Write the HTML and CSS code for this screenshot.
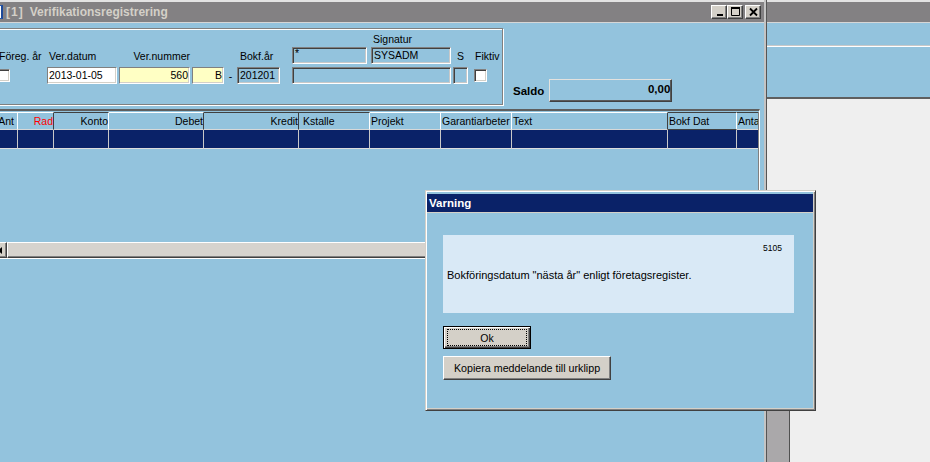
FILE: index.html
```html
<!DOCTYPE html>
<html>
<head>
<meta charset="utf-8">
<link rel="stylesheet" href="styles.css">
</head>
<body>
<div class="screen">
  <div class="main">
    <div class="topline"></div>
    <div class="titlebar">
      <span class="appicon"></span>
      <span class="title"><span class="tnum">[1]</span><span class="tname">Verifikationsregistrering</span></span>
      <div class="winbtns">
        <span class="wbtn"><svg width="14" height="12" viewBox="0 0 14 12"><rect x="5" y="8" width="6" height="2" fill="#000"/></svg></span>
        <span class="wbtn"><svg width="14" height="12" viewBox="0 0 14 12"><path d="M3.5 1.5h8v8h-8z" fill="none" stroke="#000"/><rect x="3" y="1" width="9" height="2" fill="#000"/></svg></span>
        <span class="wbtn wclose"><svg width="14" height="12" viewBox="0 0 14 12"><path d="M4 2.5L11 9.5M11 2.5L4 9.5" stroke="#000" stroke-width="1.8"/></svg></span>
      </div>
    </div>
    <div class="client">
      <div class="toprow">
        <div class="groupbox">
          <span class="lbl a-foreg-l">Föreg. år</span>
          <span class="chk a-foreg-c"></span>
          <span class="lbl a-datum-l">Ver.datum</span>
          <span class="fld white a-datum-f">2013-01-05</span>
          <span class="lbl a-num-l">Ver.nummer</span>
          <span class="fld yellow a-num-f">560</span>
          <span class="fld yellow a-b-f">B</span>
          <span class="lbl a-dash">-</span>
          <span class="lbl a-bokf-l">Bokf.år</span>
          <span class="fld ro a-bokf-f">201201</span>
          <span class="fld ro star a-star-f">*</span>
          <span class="lbl a-sig-l">Signatur</span>
          <span class="fld ro a-sig-f">SYSADM</span>
          <span class="fld ro a-wide-f"></span>
          <span class="lbl a-s-l">S</span>
          <span class="fld ro a-s-f"></span>
          <span class="lbl a-fik-l">Fiktiv</span>
          <span class="chk a-fik-c"></span>
        </div>
        <div class="saldo">
          <span class="saldo-label">Saldo</span>
          <div class="saldo-box">0,00</div>
        </div>
      </div>
      <div class="gridframe">
        <div class="gridinner">
          <div class="ghead">
            <div class="hc right">Ant</div>
            <div class="hc right red dr">Rad</div>
            <div class="hc right dt">Konto</div>
            <div class="hc right dr">Debet</div>
            <div class="hc right dt dr">Kredit</div>
            <div class="hc dt kst">Kstalle</div>
            <div class="hc">Projekt</div>
            <div class="hc">Garantiarbeter</div>
            <div class="hc dr">Text</div>
            <div class="hc dt db">Bokf Dat</div>
            <div class="hc dt last">Antal</div>
          </div>
          <div class="grow">
            <div class="rc"></div><div class="rc"></div><div class="rc"></div><div class="rc"></div>
            <div class="rc"></div><div class="rc"></div><div class="rc"></div><div class="rc"></div>
            <div class="rc"></div><div class="rc"></div><div class="rc last"></div>
          </div>
          <div class="gempty"></div>
          <div class="hscroll">
            <span class="sbtn"><svg width="4" height="7" viewBox="0 0 4 7"><polygon points="4,0 4,7 0,3.5" fill="#000"/></svg></span>
            <span class="sthumb"></span>
          </div>
        </div>
      </div>
    </div>
  </div>
  <div class="vsplit"></div>
  <div class="side">
    <div class="topline"></div>
    <div class="side-title"></div>
    <div class="side-blue"><div class="hline"></div></div>
    <div class="side-gray"><div class="side-block"></div></div>
  </div>

  <div class="dialog">
    <div class="dlg-title">Varning</div>
    <div class="dlg-body">
      <div class="msgpanel">
        <div class="msgcode">5105</div>
        <div class="msgtext">Bokföringsdatum "nästa år" enligt företagsregister.</div>
      </div>
      <div class="btn btn-ok"><span class="focus">Ok</span></div>
      <div class="btn btn-copy">Kopiera meddelande till urklipp</div>
    </div>
  </div>
</div>
</body>
</html>
```

FILE: styles.css
```css
* { box-sizing: border-box; margin: 0; padding: 0; }
html, body { width: 930px; height: 462px; overflow: hidden; }
body {
  background: #93c3dd;
  font-family: "Liberation Sans", Arial, sans-serif;
  font-size: 10.5px;
  color: #000;
}
.screen {
  position: relative;
  display: flex;
  width: 930px;
  height: 462px;
  overflow: hidden;
}

/* ---------- main window ---------- */
.main {
  width: 764px;
  flex: none;
  display: flex;
  flex-direction: column;
}
.topline { height: 2px; background: #e3e3e3; flex: none; }
.titlebar {
  height: 21px;
  flex: none;
  background: #838183;
  border-bottom: 1px solid #d6d6d6;
  display: flex;
  align-items: center;
}
.appicon {
  width: 16px;
  height: 14px;
  margin-left: -13px;
  background: #fff;
  border: 1px solid #2a5aa8;
  border-right: 2px solid #1d4a9a;
  flex: none;
}
.title {
  margin-left: 3px;
  color: #d4d0c8;
  font-weight: bold;
  font-size: 12px;
  white-space: nowrap;
  display: flex;
}
.tnum { letter-spacing: 1px; margin-right: 6px; }
.winbtns {
  margin-left: auto;
  padding-right: 3px;
  display: flex;
}
.wbtn {
  width: 16px;
  height: 14px;
  background: #d4d0c8;
  border: 1px solid;
  border-color: #fff #404040 #404040 #fff;
  box-shadow: inset -1px -1px #808080;
  display: block;
}
.wbtn svg { display: block; }
.wclose { margin-left: 2px; }

.client {
  flex: 1;
  padding-top: 5px;
}
.toprow {
  display: flex;
  align-items: flex-end;
}
.groupbox {
  margin-left: -10px;
  width: 513px;
  height: 77px;
  flex: none;
  border: 1px solid #808080;
  box-shadow: inset 1px 1px #fff, 1px 1px #fff;
  padding: 3px 0 0 6px;
  display: grid;
  grid-template-columns: 50px 70px 2px 71px 2px 32px 13px 43px 12px 75px 4px 80px 2px 15px 6px 26px;
  grid-template-rows: 15px 17px 3px 17px;
}
.lbl {
  white-space: nowrap;
  line-height: 12px;
  align-self: center;
}
.fld {
  height: 17px;
  border: 1px solid;
  border-color: #808080 #fff #fff #808080;
  padding: 0 1px;
  line-height: 15px;
  white-space: nowrap;
  overflow: hidden;
}
.fld.white { background: #fff; box-shadow: inset -1px -1px #d4d0c8; }
.fld.yellow { background: #ffffc4; text-align: right; box-shadow: inset -1px -1px #d4d0c8; }
.fld.ro {
  box-shadow: inset 1px 1px #404040, inset -1px -1px #c8c8c8;
  padding-left: 2px;
}
.fld.star { line-height: 11px; padding-left: 2px; }
.chk {
  width: 13px;
  height: 13px;
  background: #fff;
  border: 1px solid;
  border-color: #808080 #fff #fff #808080;
  box-shadow: inset 1px 1px #404040, inset -1px -1px #d4d0c8;
  align-self: center;
}

.a-foreg-l { grid-area: 2 / 1; padding-left: 2px; }
.a-foreg-c { grid-area: 4 / 1; }
.a-datum-l { grid-area: 2 / 2; padding-left: 2px; }
.a-datum-f { grid-area: 4 / 2; }
.a-num-l { grid-area: 2 / 4; text-align: right; }
.a-num-f { grid-area: 4 / 4; }
.a-b-f { grid-area: 4 / 6; }
.a-dash { grid-area: 4 / 7; text-align: center; }
.a-bokf-l { grid-area: 2 / 8; padding-left: 3px; }
.a-bokf-f { grid-area: 4 / 8; }
.a-star-f { grid-area: 2 / 10; }
.a-sig-l { grid-area: 1 / 12; padding-left: 2px; align-self: start; margin-top: 1px; }
.a-sig-f { grid-area: 2 / 12; }
.a-wide-f { grid-area: 4 / 10 / 5 / 13; }
.a-s-l { grid-area: 2 / 14; text-align: center; }
.a-s-f { grid-area: 4 / 14; }
.a-fik-l { grid-area: 2 / 16; padding-left: 1px; }
.a-fik-c { grid-area: 4 / 16; }

.saldo {
  display: flex;
  align-items: center;
  gap: 5px;
  margin: 0 0 3px 10px;
}
.saldo-label { font-weight: bold; font-size: 11.5px; }
.saldo-box {
  width: 123px;
  height: 23px;
  border: 1px solid;
  border-color: #e4e2de #404040 #404040 #e4e2de;
  box-shadow: inset -1px -1px #5a5a5a;
  text-align: right;
  font-weight: bold;
  font-size: 11.5px;
  line-height: 19px;
  padding-right: 1px;
}

/* ---------- grid ---------- */
.gridframe {
  margin: 4px 0 0 -40px;
  width: 800px;
  height: 150px;
  border-top: 2px solid #5e5e5e;
  border-right: 1px solid #fff;
  border-bottom: 1px solid #fff;
  padding-top: 1px;
}
.gridinner {
  height: 100%;
  border-right: 1px solid #808080;
  display: flex;
  flex-direction: column;
  overflow: hidden;
}
.ghead, .grow {
  display: grid;
  grid-template-columns: 58px 36px 55px 95px 95px 71px 71px 71px 156px 69px 21px;
  flex: none;
}
.ghead { height: 18px; }
.hc {
  border-top: 1px solid #fff;
  border-right: 1px solid #fff;
  border-bottom: 1px solid #d8d8d8;
  padding-left: 1px;
  line-height: 16px;
  white-space: nowrap;
  overflow: hidden;
}
.hc.right { text-align: right; padding-left: 0; padding-right: 0; }
.hc.red { color: #ff0000; }
.hc.dt { border-top-color: #404040; }
.hc.dr { border-right-color: #404040; }
.hc.db { border-bottom-color: #404040; }
.hc.kst { padding-left: 4px; }
.hc.last { border-right: none; }
.ghead .hc:first-child { padding-right: 3px; }
.grow { height: 19px; }
.rc {
  background: #0a2268;
  border-right: 1px solid #c8c8c8;
  border-bottom: 1px solid #dcdcdc;
}
.rc.last { border-right: none; }
.gempty { flex: 1; }
.hscroll {
  height: 16px;
  flex: none;
  display: flex;
}
.sbtn {
  width: 47px;
  flex: none;
  background: #d4d0c8;
  border-top: 1px solid #fff;
  border-right: 1px solid #404040;
  border-bottom: 1px solid #404040;
  box-shadow: inset -1px -1px #808080;
  display: flex;
  align-items: center;
  justify-content: flex-end;
  padding-right: 4px;
}
.sbtn svg { display: block; }
.sthumb {
  flex: 1;
  background: #d6d3ce;
  border-top: 1px solid #fff;
  border-left: 1px solid #fff;
  border-bottom: 1px solid #404040;
  box-shadow: inset 0 -1px #808080;
}

/* ---------- right side ---------- */
.vsplit {
  width: 3px;
  flex: none;
  border-left: 2px solid #c4c4c4;
  background: #555;
}
.side {
  flex: 1;
  display: flex;
  flex-direction: column;
}
.side-title {
  height: 21px;
  flex: none;
  background: #838183;
  border-bottom: 1px solid #d6d6d6;
}
.side-blue {
  height: 76px;
  flex: none;
  background: #93c3dd;
  border-bottom: 2px solid #5f5f5f;
  padding-top: 22px;
}
.hline {
  height: 2px;
  border-top: 1px solid #c8c8c8;
  background: #fff;
}
.side-gray {
  flex: 1;
  background: #efefef;
  display: flex;
  align-items: flex-end;
}
.side-block {
  width: 23px;
  height: 82px;
  background: #aaa8aa;
  border-right: 1px solid #505050;
}

/* ---------- dialog ---------- */
.dialog {
  position: absolute;
  left: 425px;
  top: 190px;
  width: 391px;
  height: 221px;
  background: #93c3dd;
  border: 1px solid;
  border-color: #d4d0c8 #404040 #404040 #d4d0c8;
  box-shadow: inset 1px 1px #fff, inset -1px -1px #808080, inset -2px -2px #d4d0c8;
  padding: 3px 2px 3px 1px;
}
.dlg-title {
  height: 19px;
  background: #0a2268;
  color: #fff;
  font-weight: bold;
  font-size: 11.5px;
  line-height: 18px;
  padding-left: 2px;
  border-bottom: 1px solid #d4d0c8;
}
.dlg-body {
  padding: 22px 0 0 16px;
}
.msgpanel {
  width: 351px;
  height: 78px;
  background: #d9e9f6;
  padding: 8px 12px 0 4px;
}
.msgcode {
  text-align: right;
  font-size: 8.5px;
  line-height: 10px;
}
.msgtext {
  margin-top: 16px;
  font-size: 11px;
  line-height: 12px;
  white-space: nowrap;
}
.btn {
  background: #d4d0c8;
  display: flex;
  align-items: center;
  justify-content: center;
  white-space: nowrap;
  line-height: 12px;
}
.btn-ok {
  margin-top: 13px;
  width: 88px;
  height: 23px;
  border: 1px solid #000;
  box-shadow: inset 1px 1px #fff, inset -1px -1px #404040, inset -2px -2px #808080;
  padding: 2px 3px;
  align-items: stretch;
}
.btn-ok .focus {
  flex: 1;
  border: 1px dotted #000;
  display: flex;
  align-items: center;
  justify-content: center;
}
.btn-copy {
  margin-top: 7px;
  width: 168px;
  height: 24px;
  border: 1px solid;
  border-color: #fff #404040 #404040 #fff;
  box-shadow: inset -1px -1px #808080;
  font-size: 10.7px;
}
```
